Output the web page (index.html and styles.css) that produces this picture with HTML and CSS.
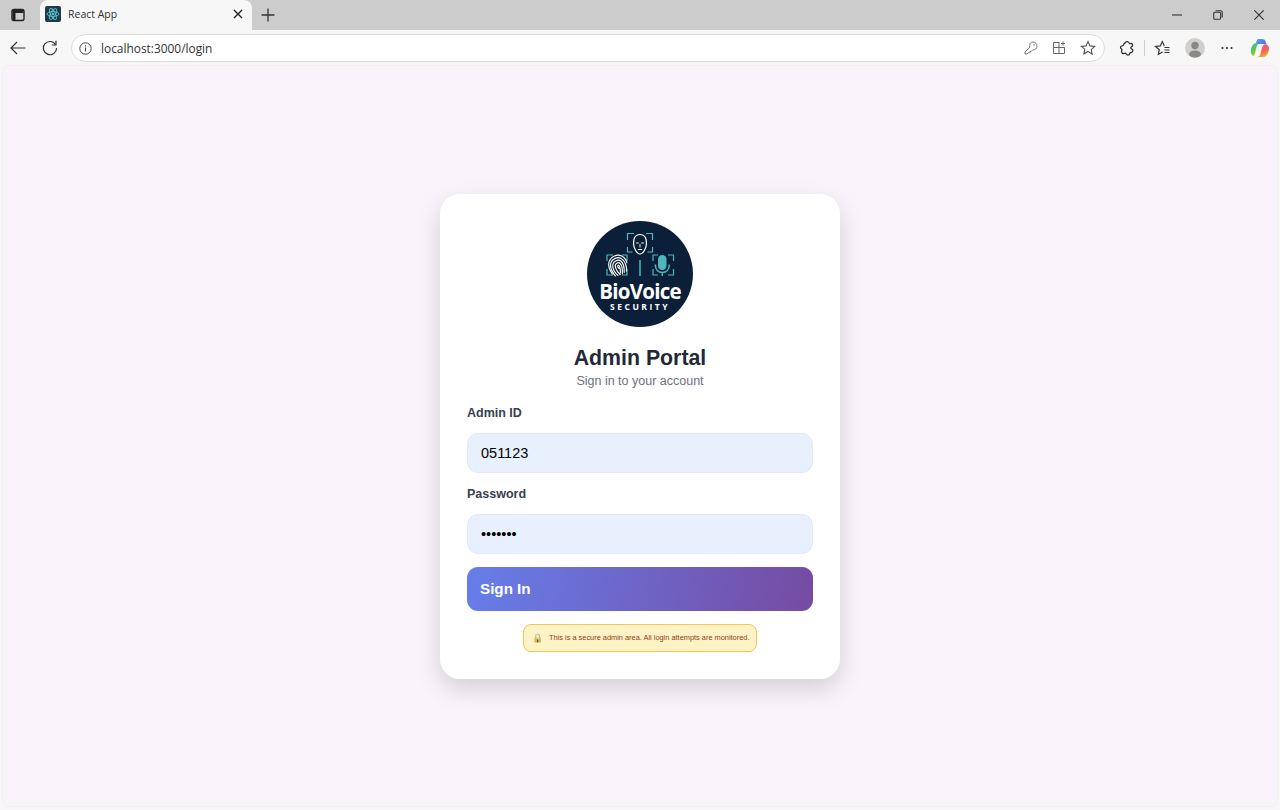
FILE: index.html
```html
<!DOCTYPE html>
<html lang="en">
<head>
<meta charset="utf-8">
<title>React App</title>
<link rel="stylesheet" href="styles.css">
</head>
<body>
<div class="browser">
  <div class="tabstrip">
    <div class="tabs-btn">
      <svg class="ic" width="16" height="16" viewBox="0 0 16 16"><rect x="2" y="2.500" width="12" height="11" rx="2" fill="none" stroke="#222" stroke-width="1.400"/><path d="M2.500 3h11v3h-11zM2.500 6h3v7h-3z" fill="#222"/></svg>
    </div>
    <div class="tab">
      <svg class="favicon" width="16" height="16" viewBox="0 0 16 16"><rect width="16" height="16" rx="2" fill="#1f3a44"/><g fill="none" stroke="#5cc4d8" stroke-width=".9"><ellipse cx="8" cy="8" rx="6" ry="2.400"/><ellipse cx="8" cy="8" rx="6" ry="2.400" transform="rotate(60 8 8)"/><ellipse cx="8" cy="8" rx="6" ry="2.400" transform="rotate(120 8 8)"/></g><circle cx="8" cy="8" r="1.300" fill="#5cc4d8"/></svg>
      <span class="tab-title">React App</span>
      <svg class="tab-close" width="10" height="10" viewBox="0 0 10 10"><path d="M1 1l8 8M9 1l-8 8" stroke="#222" stroke-width="1.400" fill="none"/></svg>
    </div>
    <svg class="newtab" width="14" height="14" viewBox="0 0 14 14"><path d="M7 .5v13M.5 7h13" stroke="#333" stroke-width="1.300" fill="none"/></svg>
    <div class="winctl">
      <svg width="10" height="10" viewBox="0 0 10 10"><path d="M0 5h10" stroke="#333" stroke-width="1.100"/></svg>
      <svg width="10" height="10" viewBox="0 0 10 10"><rect x=".7" y="2.200" width="7" height="7" rx="1.200" fill="none" stroke="#333" stroke-width="1.100"/><path d="M2.600 .8h5.200a1.400 1.400 0 0 1 1.400 1.400v5.200" fill="none" stroke="#333" stroke-width="1.100"/></svg>
      <svg width="10" height="10" viewBox="0 0 10 10"><path d="M.3.3l9.400 9.400M9.700.3L.3 9.700" stroke="#333" stroke-width="1.100" fill="none"/></svg>
    </div>
  </div>
  <div class="toolbar">
    <svg class="back" width="16" height="14" viewBox="0 0 16 14"><path d="M15.500 7H1M7 1L1 7l6 6" fill="none" stroke="#333" stroke-width="1.200"/></svg>
    <svg class="reload" width="16" height="16" viewBox="0 0 16 16"><path d="M13.600 4.600A6.600 6.600 0 1 0 14.600 8" fill="none" stroke="#333" stroke-width="1.200"/><path d="M14 .8v4.200H9.800" fill="none" stroke="#333" stroke-width="1.200"/></svg>
    <div class="omnibox">
      <svg class="info" width="13" height="13" viewBox="0 0 13 13"><circle cx="6.500" cy="6.500" r="5.700" fill="none" stroke="#444" stroke-width="1"/><path d="M6.500 5.600v4M6.500 3.300v1.200" stroke="#444" stroke-width="1.100"/></svg>
      <span class="url">localhost:3000/login</span>
      <div class="omni-icons">
        <svg width="14" height="14" viewBox="0 0 14 14"><path d="M8.800 1a4 4 0 0 1 4.200 4.200c0 2.400-2.200 4-4.300 3.700L7.300 10.300H6v1.400H4.500L3 13H1v-2l4.900-4.900C5 3.700 6.500 1 8.800 1z" fill="none" stroke="#777" stroke-width="1"/><circle cx="10" cy="4" r=".8" fill="#777"/></svg>
        <svg width="14" height="14" viewBox="0 0 14 14"><path d="M7.500 1.500H1.500v11h11V6.500H1.500M7 1.500v11M11 .5v4M9 2.500h4" fill="none" stroke="#666" stroke-width="1"/></svg>
        <svg width="16" height="16" viewBox="0 0 16 16"><path d="M8 1.500l2 4.400 4.700.5-3.500 3.200 1 4.700L8 11.400l-4.200 2.400 1-4.700L1.300 6.400 6 5.900z" fill="none" stroke="#555" stroke-width="1.100"/></svg>
      </div>
    </div>
    <svg class="ext" width="16" height="16" viewBox="0 0 16 16"><path d="M6.400 2.700C6.600 1.300 9.300 1 10 2.900c.2.600.9.900 1.500.7 1.500-.4 2.700 1 2 2.300-.3.600-1 .9-1.400 1.300-.8.700-.2 1.400.5 1.600 1.900.6 1.500 3.400-.4 3.700-1 .2-1.300.5-1.500 1.300-.4 1.500-2.700 1.700-3.400.2-.4-.8-1-1-1.900-.6-1.800.8-3.600-1.100-2.600-2.800.4-.7.300-1.300-.4-1.800C.8 8 1.500 5.800 3.200 5.800c.9 0 1.300-.4 1.400-1.200.2-1 1.200-1.500 1.800-1.900z" fill="none" stroke="#333" stroke-width="1.300"/></svg>
    <span class="divider"></span>
    <svg class="favs" width="16" height="16" viewBox="0 0 16 16"><path d="M8.500 12l-4.200 2.400 1-4.700L1.600 6.400l4.700-.5L8.300 1.600l2 4.300" fill="none" stroke="#333" stroke-width="1.200"/><path d="M10.500 7.500h5M10.500 10h5M10.500 12.500h5" stroke="#333" stroke-width="1.100"/></svg>
    <svg class="avatar" width="20" height="20" viewBox="0 0 20 20"><circle cx="10" cy="10" r="10" fill="#d2d0ce"/><circle cx="10" cy="7.500" r="3.700" fill="#8a8886"/><ellipse cx="10" cy="16" rx="6" ry="3.600" fill="#8a8886"/></svg>
    <svg class="more" width="12" height="4" viewBox="0 0 12 4"><circle cx="1.500" cy="2" r="1.100" fill="#333"/><circle cx="6" cy="2" r="1.100" fill="#333"/><circle cx="10.500" cy="2" r="1.100" fill="#333"/></svg>
    <svg class="copilot" width="20" height="20" viewBox="0 0 20 20">
      <defs>
        <linearGradient id="cpa" x1="0" y1="0" x2="1" y2="1"><stop offset="0" stop-color="#3fb6e8"/><stop offset="1" stop-color="#6a50e0"/></linearGradient>
        <linearGradient id="cpb" x1="0" y1="0" x2=".6" y2="1"><stop offset="0" stop-color="#38b8c0"/><stop offset=".6" stop-color="#5cc850"/><stop offset="1" stop-color="#f0d020"/></linearGradient>
        <linearGradient id="cpc" x1=".2" y1="0" x2=".6" y2="1"><stop offset="0" stop-color="#e850a0"/><stop offset=".6" stop-color="#f06a50"/><stop offset="1" stop-color="#f5b030"/></linearGradient>
      </defs>
      <path d="M8 1h4c2 0 3 .8 3.500 2.500L17 8c-1-1.500-2-2-3-2H8.500C7 6 6 7 5.500 8.500 6 5 6.500 1.500 8 1z" fill="url(#cpa)"/>
      <path d="M4.500 5.500C5.500 5 7.500 5 8 6 7 7 6.500 9 6 11l-1 5c-.3 1.500-1.500 2.500-2.500 1.500C1 16 .5 14 1 11.500 1.500 8.500 3 6 4.500 5.500z" fill="url(#cpb)"/>
      <path d="M14 6.500c2.500-.5 5 1 5 3.500 0 3-1.500 7-3.500 8.300-.8.500-1.500.7-2.500.7H7c2 0 3-1 3.500-3 .7-3 1.500-8 3.500-9.500z" fill="url(#cpc)"/>
    </svg>
  </div>
  <main class="viewport">
    <section class="card">
      <svg class="logo" width="106" height="106" viewBox="0 0 106 106" role="img" aria-label="BioVoice Security logo">
        <circle cx="53" cy="53" r="53" fill="#0b1f38"/>
        <g fill="none" stroke="#4fb8bd" stroke-width="1.200">
          <path d="M40.500 19v-6.500h6.500M59 12.500h6.500V19M40.500 26v5h5M65.500 26v5h-5"/>
          <path d="M26 34h-6v6M26 54h-6v-6M35 34h5v6M35 54h5v-6"/>
          <path d="M71 34h-5v6M71 54h-5v-6M81 34h5.500v6M81 54h5.500v-6"/>
          <path d="M53 39v16" stroke-width="1.500"/>
        </g>
        <g fill="none" stroke="#fff" stroke-width="1.200">
          <path d="M46.500 22c0-5.500 2.500-8.500 6.500-8.500s6.500 3 6.500 8.500c0 5.500-3.500 11-6.500 11s-6.500-5.500-6.500-11z"/>
          <path d="M49 22h2.800M54.200 22H57M53 23v3.500M50.800 28.500h4.400" stroke-width=".9"/>
        </g>
        <g fill="none" stroke="#fff" stroke-width="1.150" stroke-linecap="round" transform="rotate(-25 30.500 44)">
          <path d="M22 50C20 40 25 34.500 31 34.500C37 34.500 41 39 40 46"/>
          <path d="M24 53C21.500 44 24 37 31 37C36 37 39 41 38 48C37.700 50 37 52 36 53.500"/>
          <path d="M26.500 53.500C23.500 47 25 39.500 31 39.500C35 39.500 36.500 43 35.800 47C35.400 49.500 34.500 51.500 33.500 53.500"/>
          <path d="M29 54C26.500 49 27 42 31 42C34 42 34.200 45.500 33.500 48.500C33 50.500 32 52.500 31.300 54"/>
          <path d="M30.500 48C29.500 46 30 44.500 31 44.500C32 44.500 31.800 47 31 49.500L29.800 52.500"/>
        </g>
        <rect x="71" y="34" width="8.500" height="15" rx="4.250" fill="#4fb8bd"/>
        <path d="M68.300 43.500c0 5 3 8 7 8s7-3 7-8M75.300 51.500v3.500" fill="none" stroke="#4fb8bd" stroke-width="1.500"/>
        <text x="53" y="77.500" text-anchor="middle" class="logo-name">BioVoice</text>
        <text x="53" y="89" text-anchor="middle" class="logo-sub">SECURITY</text>
      </svg>
      <h1 class="title">Admin Portal</h1>
      <p class="subtitle">Sign in to your account</p>
      <form class="form">
        <label class="label" for="admin">Admin ID</label>
        <input class="input" id="admin" type="text" value="051123">
        <label class="label label-pass" for="pass">Password</label>
        <input class="input" id="pass" type="password" value="1234567">
        <button class="submit" type="button">Sign In</button>
      </form>
      <div class="notice"><span class="lock">🔒</span><span>This is a secure admin area. All login attempts are monitored.</span></div>
    </section>
  </main>
</div>
</body>
</html>
```

FILE: styles.css
```css
* { box-sizing: border-box; }
html, body { margin: 0; height: 100%; overflow: hidden; }
body { font-family: "Liberation Sans", Arial, sans-serif; background: #f7f7f7; }
.browser { height: 810px; display: flex; flex-direction: column; }
svg { display: block; flex: none; }

.tabstrip { height: 30px; background: #cccccc; display: flex; align-items: center; flex: none; padding-bottom: 1px; }
.tabs-btn { width: 40px; display: flex; justify-content: center; padding-right: 4px; }
.tab { width: 212px; height: 31px; margin-bottom: -1px; background: #f7f7f7; border-radius: 8px 8px 0 0; display: flex; align-items: center; padding: 0 9px 2px 5px; }
.favicon { margin-right: 7px; }
.tab-title { font: 10.500px "Open Sans", sans-serif; color: #333; flex: 1; }
.newtab { margin-left: 9px; }
.winctl { margin-left: auto; display: flex; align-items: center; gap: 31px; padding-right: 16px; }

.toolbar { height: 36px; background: #f7f7f7; display: flex; align-items: center; flex: none; }
.back { margin-left: 10px; }
.reload { margin-left: 16px; }
.omnibox { margin-left: 13px; width: 1034px; height: 28px; background: #fff; border: 1px solid #dcdcdc; border-radius: 14px; display: flex; align-items: center; padding: 0 8px 0 7px; }
.info { margin-right: 9px; }
.url { font: 11.900px "Open Sans", sans-serif; color: #333; flex: 1; }
.omni-icons { display: flex; align-items: center; gap: 14px; }
.ext { margin-left: 14px; }
.divider { width: 1px; height: 16px; background: #ccc; margin-left: 9px; }
.favs { margin-left: 9px; }
.avatar { margin-left: 15px; }
.more { margin-left: 16px; }
.copilot { margin-left: 17px; }

.viewport { flex: none; height: 740px; margin: 0 3px; background: #f9f4fb; border-radius: 6px; box-shadow: 0 0 2px rgba(0,0,0,.08); display: flex; align-items: center; justify-content: center; }
.card { width: 400px; height: 485px; background: #fff; border-radius: 20px; padding: 27px; box-shadow: 0 10px 25px rgba(0,0,0,.15); display: flex; flex-direction: column; align-items: center; }
.logo { margin-bottom: 19px; }
.logo-name { font: 700 20.500px "Open Sans", sans-serif; fill: #fff; letter-spacing: -.75px; }
.logo-sub { font: 700 8.500px "Open Sans", sans-serif; fill: #fff; letter-spacing: 2.500px; }
.title { margin: 0; font-size: 21.300px; line-height: 25px; font-weight: 700; color: #1f2937; }
.subtitle { margin: 3px 0 0; font-size: 12.500px; line-height: 15px; color: #6b7280; }

.form { width: 346px; display: flex; flex-direction: column; margin-top: 17px; }
.label { font-size: 12.500px; line-height: 15px; font-weight: 700; color: #374151; margin-bottom: 12px; }
.label-pass { margin-top: 14px; }
.input { width: 100%; height: 40px; background: #e8f0fe; border: 1px solid #e3e9f6; border-radius: 11px; padding: 0 13px; font: 14.500px "Liberation Sans", Arial, sans-serif; color: #000; outline: none; }
.submit { margin-top: 13px; height: 44px; border: 0; border-radius: 11px; background: linear-gradient(100deg, #667eea 0%, #764ba2 100%); color: #fff; font: bold 15.200px "Liberation Sans", Arial, sans-serif; text-align: left; padding: 0 13px 1px; }

.notice { margin-top: 13px; width: 234px; height: 28px; background: #fef3c7; border: 1px solid #f3c64f; border-radius: 8px; display: flex; align-items: center; padding-left: 8px; font-size: 7.400px; color: #92400e; white-space: nowrap; }
.lock { font-size: 9px; margin-right: 6px; filter: saturate(.7) sepia(.4); }
```
